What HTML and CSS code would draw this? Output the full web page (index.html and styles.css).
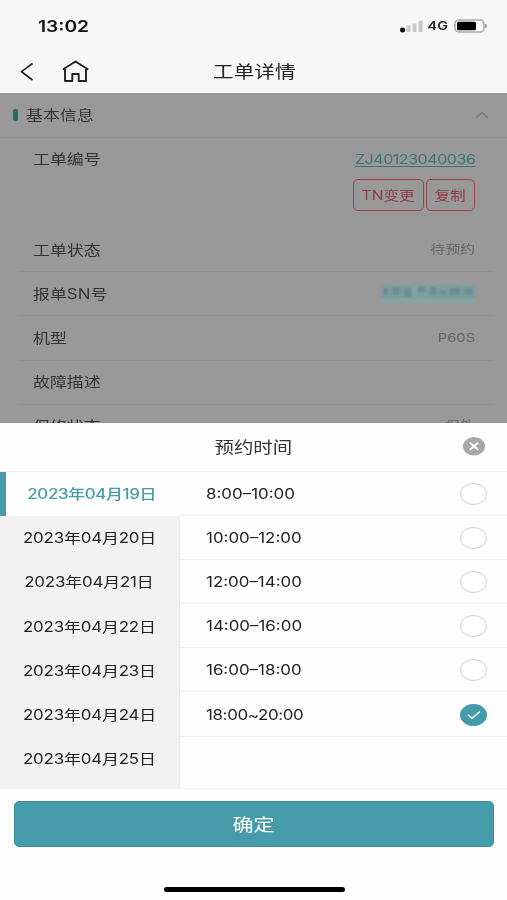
FILE: index.html
```html
<!DOCTYPE html>
<html lang="zh-CN">
<head>
<meta charset="utf-8">
<title>工单详情</title>
<link rel="stylesheet" href="styles.css">
</head>
<body>
<div class="phone">
  <header class="top">
    <div class="status">
      <span class="t clock">13:02</span>
      <div class="indicators">
        <svg width="24" height="14" viewBox="0 0 24 14"><ellipse cx="2.6" cy="11" rx="2.6" ry="2.5" fill="#111"/><path d="M6.5 6.5h4v6.5h-4zM12.5 4.500h4v8.500h-4zM18.500 2.500l4-1.500v12h-4z" fill="#c9c9c9"/></svg>
        <span class="t right net">4G</span>
        <svg width="34" height="14" viewBox="0 0 34 14"><rect x="1" y="1" width="29" height="12" rx="4" fill="#fff" stroke="#aaa" stroke-width="1.6"/><rect x="3" y="2.700" width="19" height="8.600" rx="1.500" fill="#000"/><path d="M31.500 5q2 2 0 4z" fill="#999" stroke="#999"/></svg>
      </div>
    </div>
    <nav class="nav">
      <svg class="back" width="14" height="20" viewBox="0 0 14 20"><path d="M12.500 1.500L1.500 9.700l11 8.300" fill="none" stroke="#222" stroke-width="1.600"/></svg>
      <svg class="home" width="28" height="24" viewBox="0 0 28 24"><path d="M.8 9.500L13.500 1.500l12.700 8M3 9V21h7.300v-7h6.400v7H24V9" fill="none" stroke="#222" stroke-width="1.900" stroke-linejoin="round"/></svg>
      <h1 class="title"><span class="t center">工单详情</span></h1>
    </nav>
  </header>

  <main class="details">
    <div class="section"><i class="mark"></i><span class="t">基本信息</span>
      <svg class="fold" width="14" height="8" viewBox="0 0 14 8"><path d="M1 7l6-5.500L13 7" fill="none" stroke="#777" stroke-width="1.300"/></svg></div>
    <div class="row order"><span class="t">工单编号</span>
      <div class="order-info"><a class="t right link">ZJ40123040036</a>
        <div class="actions"><span class="tag change"><span class="t center">TN变更</span></span><span class="tag copy"><span class="t center">复制</span></span></div></div></div>
    <div class="row"><span class="t">工单状态</span><span class="t right value">待预约</span></div>
    <div class="row"><span class="t">报单SN号</span><svg class="mosaic" width="94" height="18" viewBox="0 0 94 18"><path fill="#7d9d9e" d="M0 0h94v18H0z"/><path fill="#6c8e92" d="M2 3h5v7H2zM11 2h8v8h-8zM24 3h6v9h-6zM36 2h8v5h-8zM49 2h6v8h-6zM60 5h5v5h-5zM69 3h10v7H69zM83 3h9v7h-9z"/><path fill="#88a5a5" d="M0 13h94v5H0zM31 2h4v9h-4z"/></svg></div>
    <div class="row"><span class="t">机型</span><span class="t right value">P60S</span></div>
    <div class="row"><span class="t">故障描述</span></div>
    <div class="row"><span class="t">保修状态</span><span class="t right value">保外</span></div>
  </main>

  <section class="sheet">
    <div class="sheet-head"><h2><span class="t center">预约时间</span></h2>
      <svg class="close" width="24" height="20" viewBox="0 0 24 20"><ellipse cx="13" cy="9.300" rx="11" ry="9.300" fill="#a8a8a8"/><path d="M8.800 5.800l8.400 7M17.200 5.800l-8.400 7" stroke="#fff" stroke-width="1.800"/></svg></div>
    <div class="picker">
      <div class="dates">
        <div class="date active"><span class="t center">2023年04月19日</span></div>
        <div class="date"><span class="t center">2023年04月20日</span></div>
        <div class="date"><span class="t center">2023年04月21日</span></div>
        <div class="date"><span class="t center">2023年04月22日</span></div>
        <div class="date"><span class="t center">2023年04月23日</span></div>
        <div class="date"><span class="t center">2023年04月24日</span></div>
        <div class="date"><span class="t center">2023年04月25日</span></div>
      </div>
      <div class="slots">
        <div class="slot"><span class="t">8:00–10:00</span><i class="radio"></i></div>
        <div class="slot"><span class="t">10:00–12:00</span><i class="radio"></i></div>
        <div class="slot"><span class="t">12:00–14:00</span><i class="radio"></i></div>
        <div class="slot"><span class="t">14:00–16:00</span><i class="radio"></i></div>
        <div class="slot"><span class="t">16:00–18:00</span><i class="radio"></i></div>
        <div class="slot"><span class="t tight">18:00~20:00</span><i class="radio checked"><svg width="14" height="10" viewBox="0 0 14 10"><path d="M1 4.800l4 3.500L13 1.500" fill="none" stroke="#fff" stroke-width="1.500"/></svg></i></div>
      </div>
    </div>
    <div class="footer"><button class="confirm"><span class="t center">确定</span></button><div class="home-bar"></div></div>
  </section>
</div>
</body>
</html>
```
FILE: styles.css
```css
* { box-sizing: border-box; }
body { margin: 0; font-family: Inter, "Noto Sans CJK SC", sans-serif; font-size: 14.1px; color: #333; }
h1, h2 { margin: 0; font-weight: 400; }
svg { display: block; flex: none; }
.phone { position: relative; width: 507px; height: 900px; overflow: hidden; background: #999; }

/* Wide lettering used by every label */
.t { display: inline-block; white-space: nowrap; line-height: 20px; transform: scaleX(1.2); transform-origin: left center; }
.t.right { transform-origin: right center; }
.t.center { transform-origin: center; }
.t.tight { letter-spacing: -0.3px; }

.top { height: 93px; background: #f7f7f7; }
.status { height: 51px; display: flex; align-items: center; justify-content: space-between; padding: 0 19px 0 38px; }
.clock { font-size: 16px; font-weight: 600; color: #111; }
.indicators { display: flex; align-items: center; }
.net { width: 24px; text-align: right; font-size: 12px; font-weight: 600; color: #222; margin-right: 6px; }
.nav { height: 41px; display: grid; grid-template-columns: 42px 71px 1fr 113px; align-items: center; padding-left: 20px; }
.title { margin-left: -10px; margin-right: 8px; text-align: center; font-size: 17.2px; line-height: 20px; color: #222; }

.details { color: #343434; }
.section { height: 45px; display: flex; align-items: center; padding: 0 18px 0 13px; border-bottom: 1px solid #929292; }
.mark { width: 5px; height: 12px; border-radius: 2px; background: #28686c; margin-right: 7px; }
.section .t { margin-left: 1px; }
.fold { margin-left: auto; }
.row { height: 44.2px; margin: 0 14px 0 19px; padding: 0 18px 0 14px; display: flex; align-items: center; justify-content: space-between; border-bottom: 1px solid #919191; }
.order { height: 90px; align-items: flex-start; padding-top: 11px; border-bottom-color: #959595; }
.order-info { display: flex; flex-direction: column; align-items: flex-end; }
.link { color: #3c7479; font-size: 13.4px; letter-spacing: -0.4px; text-decoration: underline; text-underline-offset: 2px; }
.actions { display: flex; gap: 2px; margin-top: 10px; }
.tag { height: 32px; display: flex; align-items: center; justify-content: center; border: 1.5px solid #9c4347; border-radius: 5px; color: #8f3c41; font-size: 13px; }
.change { width: 71px; }
.copy { width: 49px; }
.value { color: #666; font-size: 12.3px; }
.mosaic { filter: blur(1px); }

.sheet { position: absolute; left: 0; right: 0; bottom: 0; height: 477px; background: #fefefe; }
.sheet-head { height: 48.5px; display: grid; grid-template-columns: 53px 1fr 53px; align-items: center; border-bottom: 1px solid #eee; }
.sheet-head h2 { grid-column: 2; text-align: center; font-size: 16.2px; line-height: 20px; }
.close { margin-left: 7px; }
.picker { height: 317.5px; display: flex; border-bottom: 1px solid #ebeff0; }
.dates { width: 180px; background: #f2f2f2; border-right: 1px solid #ebebeb; }
.date { height: 44.2px; display: flex; align-items: center; justify-content: center; color: #222; padding: 1px 1px 0 0; letter-spacing: -0.15px; }
.date.active { background: #fefefe; border-left: 6px solid #459baa; color: #459baa; font-weight: 500; width: 180px; padding-right: 2px; letter-spacing: -0.3px; }
.slots { flex: 1; color: #222; }
.slot { height: 44.2px; display: flex; align-items: center; justify-content: space-between; padding: 1px 20px 0 26px; border-bottom: 1px solid #eee; }
.radio { width: 27px; height: 22px; border: 1px solid #d5d5d5; border-radius: 50%; background: #fff; display: flex; align-items: center; justify-content: center; }
.radio.checked { background: #459baa; border-color: #459baa; }
.footer { padding: 12px 13px 0 14px; display: flex; flex-direction: column; align-items: center; }
.confirm { width: 100%; height: 46px; border: 1px solid #3f8e9a; border-radius: 5px; background: #459baa; color: #fff; font-family: inherit; font-size: 17.6px; padding: 0; }
.home-bar { width: 181px; height: 5px; margin-top: 40px; border-radius: 3px; background: #000; }
```
